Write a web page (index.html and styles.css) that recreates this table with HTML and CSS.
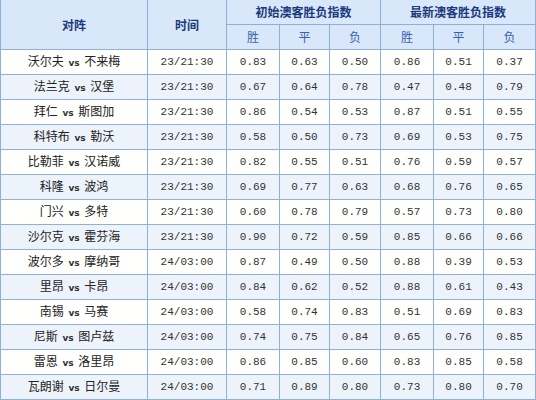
FILE: index.html
```html
<!DOCTYPE html>
<html>
<head>
<meta charset="utf-8">
<link rel="stylesheet" href="styles.css">
</head>
<body>
<table class="odds">
  <colgroup>
    <col class="c-match"><col class="c-time">
    <col class="c-a"><col class="c-b"><col class="c-c">
    <col class="c-a"><col class="c-b"><col class="c-d">
  </colgroup>
  <thead>
    <tr>
      <th rowspan="2" class="main">对阵</th>
      <th rowspan="2" class="main">时间</th>
      <th colspan="3" class="main">初始澳客胜负指数</th>
      <th colspan="3" class="main">最新澳客胜负指数</th>
    </tr>
    <tr>
      <th class="sub">胜</th><th class="sub">平</th><th class="sub">负</th>
      <th class="sub">胜</th><th class="sub">平</th><th class="sub">负</th>
    </tr>
  </thead>
  <tbody>
    <tr><td class="m">沃尔夫 <span class="vs">vs</span> 不来梅</td><td class="n">23/21:30</td><td class="n">0.83</td><td class="n">0.63</td><td class="n">0.50</td><td class="n">0.86</td><td class="n">0.51</td><td class="n">0.37</td></tr>
    <tr><td class="m">法兰克 <span class="vs">vs</span> 汉堡</td><td class="n">23/21:30</td><td class="n">0.67</td><td class="n">0.64</td><td class="n">0.78</td><td class="n">0.47</td><td class="n">0.48</td><td class="n">0.79</td></tr>
    <tr><td class="m">拜仁 <span class="vs">vs</span> 斯图加</td><td class="n">23/21:30</td><td class="n">0.86</td><td class="n">0.54</td><td class="n">0.53</td><td class="n">0.87</td><td class="n">0.51</td><td class="n">0.55</td></tr>
    <tr><td class="m">科特布 <span class="vs">vs</span> 勒沃</td><td class="n">23/21:30</td><td class="n">0.58</td><td class="n">0.50</td><td class="n">0.73</td><td class="n">0.69</td><td class="n">0.53</td><td class="n">0.75</td></tr>
    <tr><td class="m">比勒菲 <span class="vs">vs</span> 汉诺威</td><td class="n">23/21:30</td><td class="n">0.82</td><td class="n">0.55</td><td class="n">0.51</td><td class="n">0.76</td><td class="n">0.59</td><td class="n">0.57</td></tr>
    <tr><td class="m">科隆 <span class="vs">vs</span> 波鸿</td><td class="n">23/21:30</td><td class="n">0.69</td><td class="n">0.77</td><td class="n">0.63</td><td class="n">0.68</td><td class="n">0.76</td><td class="n">0.65</td></tr>
    <tr><td class="m">门兴 <span class="vs">vs</span> 多特</td><td class="n">23/21:30</td><td class="n">0.60</td><td class="n">0.78</td><td class="n">0.79</td><td class="n">0.57</td><td class="n">0.73</td><td class="n">0.80</td></tr>
    <tr><td class="m">沙尔克 <span class="vs">vs</span> 霍芬海</td><td class="n">23/21:30</td><td class="n">0.90</td><td class="n">0.72</td><td class="n">0.59</td><td class="n">0.85</td><td class="n">0.66</td><td class="n">0.66</td></tr>
    <tr><td class="m">波尔多 <span class="vs">vs</span> 摩纳哥</td><td class="n">24/03:00</td><td class="n">0.87</td><td class="n">0.49</td><td class="n">0.50</td><td class="n">0.88</td><td class="n">0.39</td><td class="n">0.53</td></tr>
    <tr><td class="m">里昂 <span class="vs">vs</span> 卡昂</td><td class="n">24/03:00</td><td class="n">0.84</td><td class="n">0.62</td><td class="n">0.52</td><td class="n">0.88</td><td class="n">0.61</td><td class="n">0.43</td></tr>
    <tr><td class="m">南锡 <span class="vs">vs</span> 马赛</td><td class="n">24/03:00</td><td class="n">0.58</td><td class="n">0.74</td><td class="n">0.83</td><td class="n">0.51</td><td class="n">0.69</td><td class="n">0.83</td></tr>
    <tr><td class="m">尼斯 <span class="vs">vs</span> 图卢兹</td><td class="n">24/03:00</td><td class="n">0.74</td><td class="n">0.75</td><td class="n">0.84</td><td class="n">0.65</td><td class="n">0.76</td><td class="n">0.85</td></tr>
    <tr><td class="m">雷恩 <span class="vs">vs</span> 洛里昂</td><td class="n">24/03:00</td><td class="n">0.86</td><td class="n">0.85</td><td class="n">0.60</td><td class="n">0.83</td><td class="n">0.85</td><td class="n">0.58</td></tr>
    <tr><td class="m">瓦朗谢 <span class="vs">vs</span> 日尔曼</td><td class="n">24/03:00</td><td class="n">0.71</td><td class="n">0.89</td><td class="n">0.80</td><td class="n">0.73</td><td class="n">0.80</td><td class="n">0.70</td></tr>
  </tbody>
</table>
</body>
</html>
```

FILE: styles.css
```css
html, body {
  margin: 0;
  padding: 0;
  background: #ffffff;
}
.odds {
  border-collapse: collapse;
  table-layout: fixed;
  width: 536px;
  font-family: "Noto Sans CJK SC", "Liberation Sans", sans-serif;
  font-size: 12px;
  color: #333333;
}
.c-match { width: 147px; }
.c-time { width: 79px; }
.c-a { width: 53px; }
.c-b { width: 50px; }
.c-c { width: 51px; }
.c-d { width: 52px; }
.odds th, .odds td {
  border: 1px solid #8fb1d8;
  padding: 0;
  height: 24px;
  text-align: center;
  vertical-align: middle;
  line-height: 14px;
}
.odds thead tr:first-child th {
  border-top: none;
}
.odds th {
  background: #d8e7f9;
  color: #1a3a7c;
}
.odds th.main {
  font-weight: bold;
  font-size: 12px;
}
.odds th.sub {
  font-weight: normal;
  color: #3a62a8;
}
.odds tbody tr:nth-child(odd) td { background: #fffffd; }
.odds tbody tr:nth-child(even) td { background: #edf3fb; }
.odds td.m {
  color: #222222;
}
.vs {
  font-family: "DejaVu Sans", sans-serif;
  font-size: 9px;
  font-weight: bold;
  color: #333333;
  padding: 0 2px;
}
.odds td.n {
  font-family: "Liberation Mono", monospace;
  font-size: 11px;
  color: #333333;
}
```
